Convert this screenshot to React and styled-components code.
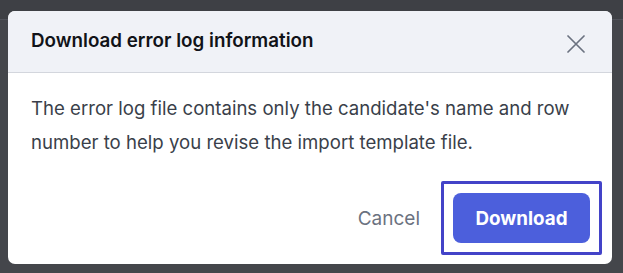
import React from "react";
import styled, { createGlobalStyle } from "styled-components";

const Global = createGlobalStyle`
  html, body { margin: 0; padding: 0; }
  body {
    width: 623px;
    height: 273px;
    overflow: hidden;
    font-family: Inter, "Noto Sans", sans-serif;
    background: linear-gradient(to bottom, #3e4045 0, #3e4045 19px, #50525a 19px, #50525a 20px, #44464b 20px, #44464b 100%);
  }
`;

const Page = styled.div`
  padding: 11px 11px 9px 8px;
  box-sizing: border-box;
  height: 273px;
`;

const Dialog = styled.div`
  width: 604px;
  height: 253px;
  background: #ffffff;
  border-radius: 7px;
  overflow: hidden;
  display: flex;
  flex-direction: column;
`;

const Header = styled.div`
  height: 62px;
  box-sizing: border-box;
  background: #f0f2f7;
  border-bottom: 1px solid #d3d6dd;
  display: flex;
  align-items: center;
  justify-content: space-between;
  padding: 0 27px 0 23px;
`;

const Title = styled.h2`
  margin: 0;
  font-size: 18.8px;
  font-weight: 600;
  color: #111318;
  position: relative;
  top: -1px;
`;

const CloseButton = styled.button`
  border: 0;
  background: transparent;
  padding: 0;
  width: 18px;
  height: 18px;
  display: flex;
  align-items: center;
  justify-content: center;
  color: #6b7280;
  cursor: pointer;
  position: relative;
  top: 2px;
`;

const Body = styled.p`
  margin: 0;
  padding: 18px 23px 0 23px;
  font-size: 18.6px;
  line-height: 34px;
  color: #3a3f4a;
`;

const Footer = styled.div`
  margin-top: auto;
  display: flex;
  justify-content: flex-end;
  align-items: center;
  gap: 21px;
  padding: 0 10px 9px 0;
`;

const TextButton = styled.button`
  border: 0;
  background: transparent;
  padding: 0;
  font-family: inherit;
  font-size: 19px;
  color: #6b7280;
  cursor: pointer;
`;

const FocusRing = styled.div`
  border: 3px solid #4343c8;
  border-radius: 2px;
  padding: 9px;
  display: flex;
`;

const PrimaryButton = styled.button`
  border: 0;
  width: 137px;
  height: 50px;
  border-radius: 8px;
  background: #4c5fdc;
  color: #ffffff;
  font-family: inherit;
  font-size: 18.8px;
  font-weight: 700;
  cursor: pointer;
`;

const XIcon = () => (
  <svg width="18" height="18" viewBox="0 0 18 18" fill="none">
    <path d="M1 1L17 17M17 1L1 17" stroke="currentColor" strokeWidth="1.7" strokeLinecap="round" />
  </svg>
);

export default function App() {
  return (
    <>
      <Global />
      <Page>
        <Dialog>
          <Header>
            <Title>Download error log information</Title>
            <CloseButton aria-label="Close">
              <XIcon />
            </CloseButton>
          </Header>
          <Body>
            The error log file contains only the candidate's name and row number to help you revise the import template file.
          </Body>
          <Footer>
            <TextButton>Cancel</TextButton>
            <FocusRing>
              <PrimaryButton>Download</PrimaryButton>
            </FocusRing>
          </Footer>
        </Dialog>
      </Page>
    </>
  );
}
